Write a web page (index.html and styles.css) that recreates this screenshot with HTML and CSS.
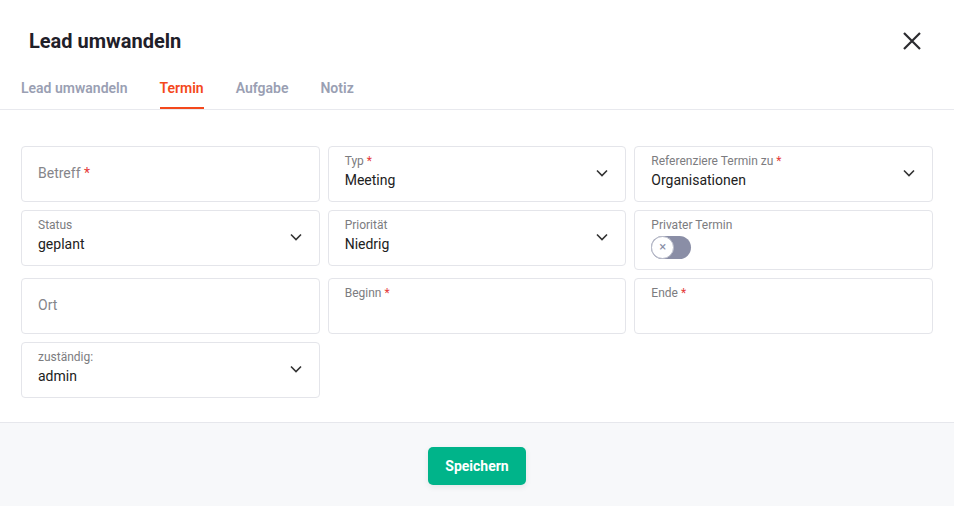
FILE: index.html
```html
<!DOCTYPE html>
<html>
  <head>
    <meta charset="utf-8"/>
    <meta name="viewport" content="width=device-width, initial-scale=1">
    <link rel="stylesheet" href="styles.css">
  </head>
<body>

<div class="modal">
  <div class="modal-header">
    <h2 class="modal-title">Lead umwandeln</h2>
    <button class="close" aria-label="Schließen">
      <svg width="20" height="20" viewBox="0 0 20 20"><path d="M2 2 L18 18 M18 2 L2 18" stroke="#2b2b2f" stroke-width="2.2" fill="none"/></svg>
    </button>
  </div>

  <div class="tabs">
    <a class="tab">Lead umwandeln</a>
    <a class="tab active">Termin</a>
    <a class="tab">Aufgabe</a>
    <a class="tab">Notiz</a>
  </div>

  <div class="modal-body">
    <div class="form-grid">
      <div class="field field-empty">
        <span class="placeholder">Betreff <span class="req">*</span></span>
      </div>
      <div class="field">
        <span class="label">Typ <span class="req">*</span></span>
        <span class="value">Meeting</span>
        <svg class="chevron" width="12" height="8" viewBox="0 0 12 8"><path d="M1 1.5 L6 6.5 L11 1.5" stroke="#333" stroke-width="1.6" fill="none"/></svg>
      </div>
      <div class="field">
        <span class="label">Referenziere Termin zu <span class="req">*</span></span>
        <span class="value">Organisationen</span>
        <svg class="chevron" width="12" height="8" viewBox="0 0 12 8"><path d="M1 1.5 L6 6.5 L11 1.5" stroke="#333" stroke-width="1.6" fill="none"/></svg>
      </div>

      <div class="field">
        <span class="label">Status</span>
        <span class="value">geplant</span>
        <svg class="chevron" width="12" height="8" viewBox="0 0 12 8"><path d="M1 1.5 L6 6.5 L11 1.5" stroke="#333" stroke-width="1.6" fill="none"/></svg>
      </div>
      <div class="field">
        <span class="label">Priorität</span>
        <span class="value">Niedrig</span>
        <svg class="chevron" width="12" height="8" viewBox="0 0 12 8"><path d="M1 1.5 L6 6.5 L11 1.5" stroke="#333" stroke-width="1.6" fill="none"/></svg>
      </div>
      <div class="field field-toggle">
        <span class="label">Privater Termin</span>
        <span class="toggle">
          <span class="knob">&times;</span>
        </span>
      </div>

      <div class="field field-empty">
        <span class="placeholder">Ort</span>
      </div>
      <div class="field">
        <span class="label">Beginn <span class="req">*</span></span>
        <span class="value"></span>
      </div>
      <div class="field">
        <span class="label">Ende <span class="req">*</span></span>
        <span class="value"></span>
      </div>

      <div class="field">
        <span class="label">zuständig:</span>
        <span class="value">admin</span>
        <svg class="chevron" width="12" height="8" viewBox="0 0 12 8"><path d="M1 1.5 L6 6.5 L11 1.5" stroke="#333" stroke-width="1.6" fill="none"/></svg>
      </div>
    </div>
  </div>

  <div class="modal-footer">
    <button class="btn-save">Speichern</button>
  </div>
</div>

</body>
</html>
```

FILE: styles.css
```css
* {
  box-sizing: border-box;
}

body {
  margin: 0;
  font-family: Roboto, "Liberation Sans", Arial, sans-serif;
  background-color: #ffffff;
  color: #212121;
}

.modal {
  width: 954px;
  min-height: 506px;
  background: #fff;
  display: flex;
  flex-direction: column;
}

.modal-header {
  display: flex;
  align-items: center;
  justify-content: space-between;
  padding: 29px 32px 0 29px;
}

.modal-title {
  margin: 0;
  font-size: 20px;
  line-height: 24px;
  font-weight: 700;
  color: #1f2029;
}

.close {
  background: none;
  border: none;
  padding: 0;
  width: 20px;
  height: 20px;
  cursor: pointer;
}

.tabs {
  display: flex;
  gap: 32px;
  margin-top: 25px;
  padding: 0 21px;
  border-bottom: 1px solid #e8e9ee;
}

.tab {
  font-size: 14px;
  line-height: 20px;
  font-weight: 600;
  color: #9a9fb3;
  padding-bottom: 9px;
  border-bottom: 2px solid transparent;
  cursor: pointer;
}

.tab.active {
  color: #f4481c;
  border-bottom-color: #f4481c;
}

.modal-body {
  padding: 36px 21px 24px;
}

.form-grid {
  display: grid;
  grid-template-columns: repeat(3, 1fr);
  gap: 8px;
  align-items: start;
}

.field {
  position: relative;
  display: flex;
  flex-direction: column;
  height: 56px;
  padding: 6px 40px 8px 16px;
  border: 1px solid #e4e5ea;
  border-radius: 4px;
  background: #fff;
}

.field-empty {
  justify-content: center;
  padding-bottom: 8px;
}

.field-toggle {
  height: 60px;
}

.label {
  font-size: 12px;
  line-height: 16px;
  color: #7c7c80;
}

.value {
  font-size: 14px;
  line-height: 22px;
  color: #212121;
}

.placeholder {
  font-size: 14px;
  line-height: 20px;
  color: #85858a;
}

.req {
  color: #e53a3a;
}

.chevron {
  position: absolute;
  right: 17px;
  top: 50%;
  margin-top: -5px;
}

.toggle {
  margin-top: 3px;
  width: 40px;
  height: 23px;
  border-radius: 12px;
  background: #8a8ea6;
  position: relative;
}

.knob {
  position: absolute;
  left: 0;
  top: 0;
  width: 23px;
  height: 23px;
  border-radius: 50%;
  background: #fff;
  border: 1px solid #b8bbc9;
  color: #8a8ea6;
  font-size: 13px;
  line-height: 20px;
  text-align: center;
}

.modal-footer {
  flex: 1;
  display: flex;
  justify-content: center;
  align-items: flex-start;
  padding: 24px 0 21px;
  border-top: 1px solid #e6e7ec;
  background: #f7f8fa;
}

.btn-save {
  width: 98px;
  height: 38px;
  border: none;
  border-radius: 5px;
  background: #00b48a;
  color: #fff;
  font-family: Roboto, "Liberation Sans", Arial, sans-serif;
  font-size: 14px;
  font-weight: 700;
  box-shadow: 0 2px 6px rgba(0, 0, 0, 0.08);
  cursor: pointer;
}
```
